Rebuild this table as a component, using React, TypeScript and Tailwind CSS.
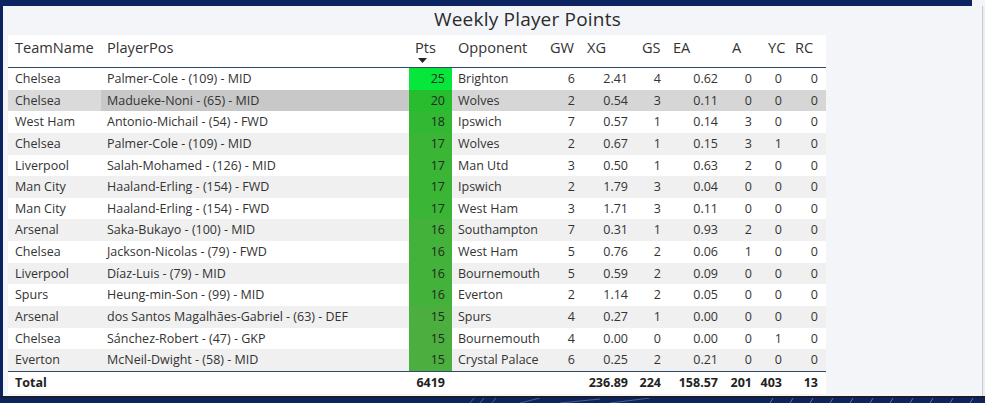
import React from 'react';

type Row = [string, string, number, string, number, string, number, string, number, number, number];

const rows: Row[] = [
    ['Chelsea', 'Palmer-Cole - (109) - MID', 25, 'Brighton', 6, '2.41', 4, '0.62', 0, 0, 0],
    ['Chelsea', 'Madueke-Noni - (65) - MID', 20, 'Wolves', 2, '0.54', 3, '0.11', 0, 0, 0],
    ['West Ham', 'Antonio-Michail - (54) - FWD', 18, 'Ipswich', 7, '0.57', 1, '0.14', 3, 0, 0],
    ['Chelsea', 'Palmer-Cole - (109) - MID', 17, 'Wolves', 2, '0.67', 1, '0.15', 3, 1, 0],
    ['Liverpool', 'Salah-Mohamed - (126) - MID', 17, 'Man Utd', 3, '0.50', 1, '0.63', 2, 0, 0],
    ['Man City', 'Haaland-Erling - (154) - FWD', 17, 'Ipswich', 2, '1.79', 3, '0.04', 0, 0, 0],
    ['Man City', 'Haaland-Erling - (154) - FWD', 17, 'West Ham', 3, '1.71', 3, '0.11', 0, 0, 0],
    ['Arsenal', 'Saka-Bukayo - (100) - MID', 16, 'Southampton', 7, '0.31', 1, '0.93', 2, 0, 0],
    ['Chelsea', 'Jackson-Nicolas - (79) - FWD', 16, 'West Ham', 5, '0.76', 2, '0.06', 1, 0, 0],
    ['Liverpool', 'Díaz-Luis - (79) - MID', 16, 'Bournemouth', 5, '0.59', 2, '0.09', 0, 0, 0],
    ['Spurs', 'Heung-min-Son - (99) - MID', 16, 'Everton', 2, '1.14', 2, '0.05', 0, 0, 0],
    ['Arsenal', 'dos Santos Magalhães-Gabriel - (63) - DEF', 15, 'Spurs', 4, '0.27', 1, '0.00', 0, 0, 0],
    ['Chelsea', 'Sánchez-Robert - (47) - GKP', 15, 'Bournemouth', 4, '0.00', 0, '0.00', 0, 1, 0],
    ['Everton', 'McNeil-Dwight - (58) - MID', 15, 'Crystal Palace', 6, '0.25', 2, '0.21', 0, 0, 0],
];

// conditional formatting for Pts
const ptsColor: Record<number, string> = {
    25: '#06e63b',
    20: '#28bd2e',
    18: '#33b833',
    17: '#3ab536',
    16: '#43b23a',
    15: '#4cae3e',
};

const grid = 'grid grid-cols-[93px_308px_43px_91px_38px_53px_33px_57px_34px_30px_38px]';

export default function App() {
    return (
        <div className="w-[985px] h-[403px] overflow-hidden bg-[#0d2360] flex flex-col font-['Open_Sans',sans-serif] text-[#333]">
            {/* top bar */}
            <div className="h-[6px] flex">
                <div className="flex-1 bg-[#0c2461]" />
                <div className="w-[13px] bg-[#f4f5f7]" />
            </div>

            <div className="flex flex-1 min-h-0">
                <div className="w-[3px] bg-[#0d2360]" />
                <div className="flex-1 bg-[#f4f5f8] flex flex-col border-r border-[#c9cacc]">
                    <div className="h-[29px] pl-[431px] text-[19px] leading-[26px] font-medium text-[#2b2b2b] tracking-[0.2px]">
                        Weekly Player Points
                    </div>

                    <div className="ml-[5px] w-[818px] bg-white flex flex-col">
                        {/* header */}
                        <div className={`${grid} h-[33px] border-b border-[#2f4a6b] text-[14.6px] leading-[24px]`}>
                            <div className="pl-[7px]">TeamName</div>
                            <div className="pl-[6px]">PlayerPos</div>
                            <div className="pl-[6px] relative">
                                Pts
                                <svg className="absolute left-[9px] top-[23px]" width="9" height="5" viewBox="0 0 9 5">
                                    <path d="M0 0 H9 L4.5 5 Z" fill="#222" />
                                </svg>
                            </div>
                            <div className="pl-[6px]">Opponent</div>
                            <div className="pl-[7px]">GW</div>
                            <div className="pl-[6px]">XG</div>
                            <div className="pl-[8px]">GS</div>
                            <div className="pl-[6px]">EA</div>
                            <div className="pl-[8px]">A</div>
                            <div className="pl-[10px]">YC</div>
                            <div className="pl-[7px]">RC</div>
                        </div>

                        {/* body */}
                        {rows.map((r, i) => {
                            const selected = i === 1;
                            const rowBg = selected ? 'bg-[#d6d6d6]' : i % 2 === 1 ? 'bg-[#f0f0f0]' : 'bg-white';
                            return (
                                <div key={i} className={`${grid} h-[21.65px] text-[12.5px] leading-[21.65px] ${rowBg}`}>
                                    <div className={`pl-[7px] whitespace-nowrap ${selected ? 'bg-[#dadada]' : ''}`}>{r[0]}</div>
                                    <div className={`pl-[6px] whitespace-nowrap ${selected ? 'bg-[#c8c8c8]' : ''}`}>{r[1]}</div>
                                    <div
                                        className="pr-[7px] text-right text-[#1e2a1e] border-b border-white/60"
                                        style={{ backgroundColor: ptsColor[r[2]] }}
                                    >
                                        {r[2]}
                                    </div>
                                    <div className="pl-[6px] whitespace-nowrap">{r[3]}</div>
                                    <div className="pr-[6px] text-right">{r[4]}</div>
                                    <div className="pr-[6px] text-right">{r[5]}</div>
                                    <div className="pr-[6px] text-right">{r[6]}</div>
                                    <div className="pr-[6px] text-right">{r[7]}</div>
                                    <div className="pr-[6px] text-right">{r[8]}</div>
                                    <div className="pr-[6px] text-right">{r[9]}</div>
                                    <div className="pr-[8px] text-right">{r[10]}</div>
                                </div>
                            );
                        })}

                        {/* total */}
                        <div className={`${grid} h-[23px] border-t border-[#2f4a6b] text-[12.5px] leading-[22px] font-bold text-[#222]`}>
                            <div className="pl-[7px]">Total</div>
                            <div />
                            <div className="pr-[7px] text-right">6419</div>
                            <div />
                            <div />
                            <div className="pr-[6px] text-right">236.89</div>
                            <div className="pr-[6px] text-right">224</div>
                            <div className="pr-[6px] text-right">158.57</div>
                            <div className="pr-[6px] text-right">201</div>
                            <div className="pr-[6px] text-right">403</div>
                            <div className="pr-[8px] text-right">13</div>
                        </div>
                    </div>
                    <div className="flex-1" />
                </div>
                <div className="w-[2px] bg-[#eceef1]" />
            </div>

            {/* bottom strip */}
            <div className="h-[7px] border-t-2 border-[#1b1b2a] bg-[#0d2360]">
                <svg width="985" height="5" viewBox="0 0 985 5">
                    <path d="M470 5 L474 0 M480 5 L484 0 M492 5 L496 0 M520 5 L540 0 M560 5 L600 1 M610 5 L650 0" stroke="#6f86b8" strokeWidth="1" opacity="0.6" />
                    <path d="M770 5 L773 0 M790 5 L793 0 M810 5 L813 0 M830 5 L833 0 M850 5 L853 0 M870 5 L873 0 M890 5 L893 0 M910 5 L913 0 M930 5 L933 0 M950 5 L953 0 M970 5 L973 0" stroke="#7d93c2" strokeWidth="1" opacity="0.7" />
                </svg>
            </div>
        </div>
    );
}
